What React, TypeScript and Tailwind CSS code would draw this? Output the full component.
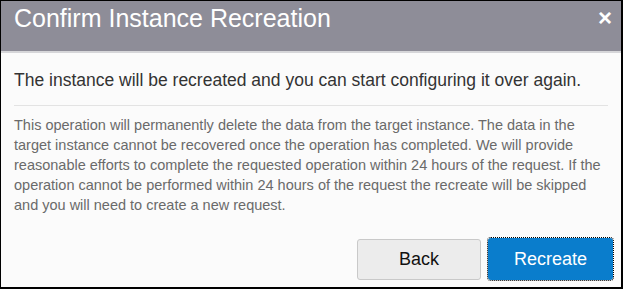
import React from "react";

export default function App() {
  return (
    <div
      className="w-[623px] h-[289px] flex flex-col bg-[#fbfbfb] border-l border-t border-r-2 border-b-2 border-black overflow-hidden"
      style={{ fontFamily: '"Liberation Sans", Arial, sans-serif' }}
    >
      <div className="h-[52px] shrink-0 bg-[#8e8d98] border-b-2 border-[#d6d6d9] flex items-start justify-between pl-[13px] pr-[9px]">
        <div className="text-[25px] leading-[32px] text-white pt-[1px]">Confirm Instance Recreation</div>
        <div className="text-[24px] leading-[24px] font-bold text-white mt-[5px]">×</div>
      </div>
      <div className="flex flex-col flex-1 px-[13px]">
        <div className="text-[17.5px] leading-[22px] text-[#333] pt-[16px] pb-[14px] border-b border-[#e3e3e3]">
          The instance will be recreated and you can start configuring it over again.
        </div>
        <div className="text-[14.5px] leading-[20px] text-[#6a6a6a] pt-[9px] pr-[4px]">
          This operation will permanently delete the data from the target instance. The data in the target instance
          cannot be recovered once the operation has completed. We will provide reasonable efforts to complete the
          requested operation within 24 hours of the request. If the operation cannot be performed within 24 hours of
          the request the recreate will be skipped and you will need to create a new request.
        </div>
        <div className="mt-auto mb-[7px] -mr-[5px] flex justify-end gap-[7px]">
          <button className="w-[124px] h-[41px] rounded-[3px] bg-[#ececec] border border-[#c9c9c9] text-[18px] text-[#111]">
            Back
          </button>
          <button className="w-[125px] h-[42px] rounded-[3px] bg-[#0a7dcc] text-[18px] text-white outline outline-1 outline-dotted outline-black -mt-[1px]">
            Recreate
          </button>
        </div>
      </div>
    </div>
  );
}
